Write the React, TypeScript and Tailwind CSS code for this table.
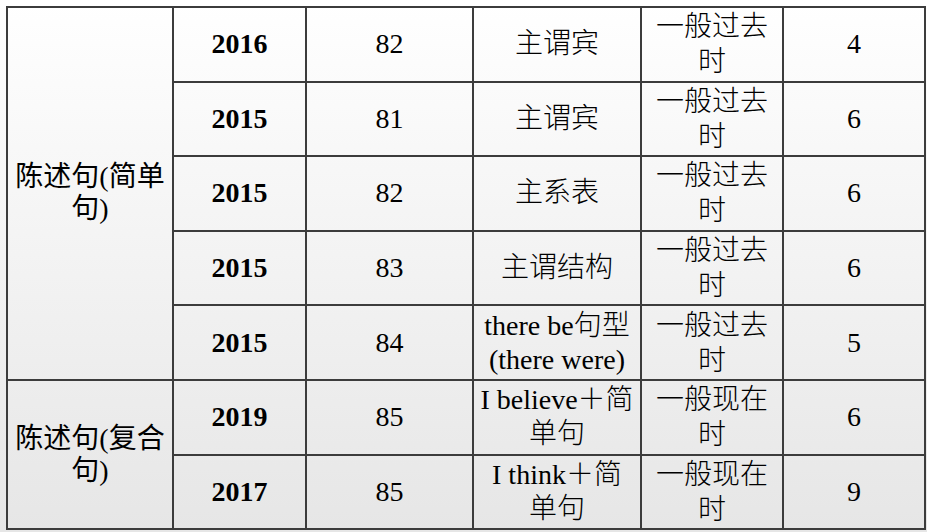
const rows = [
  { year: "2016", num: "82", type: ["主谓宾"], tense: ["一般过去", "时"], count: "4" },
  { year: "2015", num: "81", type: ["主谓宾"], tense: ["一般过去", "时"], count: "6" },
  { year: "2015", num: "82", type: ["主系表"], tense: ["一般过去", "时"], count: "6" },
  { year: "2015", num: "83", type: ["主谓结构"], tense: ["一般过去", "时"], count: "6" },
  { year: "2015", num: "84", type: ["there be句型", "(there were)"], tense: ["一般过去", "时"], count: "5" },
  { year: "2019", num: "85", type: ["I believe＋简", "单句"], tense: ["一般现在", "时"], count: "6" },
  { year: "2017", num: "85", type: ["I think＋简", "单句"], tense: ["一般现在", "时"], count: "9" },
];

const cell = "border-2 border-[#3c3c3c] text-center align-middle p-0";

function Lines({ lines, className }: { lines: string[]; className?: string }) {
  return (
    <div className={className}>
      {lines.map((l, i) => (
        <div key={i}>{l}</div>
      ))}
    </div>
  );
}

export default function App() {
  return (
    <div
      className="w-[927px] h-[532px] bg-gradient-to-b from-white to-[#e6e6e6] pt-[6px] pl-[6px] text-black text-[28px]"
      style={{ fontFamily: '"Liberation Serif", "Noto Sans CJK SC", serif' }}
    >
      <table className="table-fixed border-collapse w-[918px] border-2 border-[#1a1a1a]">
        <colgroup>
          <col className="w-[166px]" />
          <col className="w-[133px]" />
          <col className="w-[167px]" />
          <col className="w-[168px]" />
          <col className="w-[142px]" />
          <col className="w-[142px]" />
        </colgroup>
        <tbody>
          {rows.map((r, i) => (
            <tr key={i} className="h-[74.6px]">
              {i === 0 && (
                <td rowSpan={5} className={cell}>
                  <Lines lines={["陈述句(简单", "句)"]} className="leading-[32px]" />
                </td>
              )}
              {i === 5 && (
                <td rowSpan={2} className={cell}>
                  <Lines lines={["陈述句(复合", "句)"]} className="leading-[32px]" />
                </td>
              )}
              <td className={`${cell} font-bold`}>{r.year}</td>
              <td className={cell}>{r.num}</td>
              <td className={cell}>
                <Lines lines={r.type} className="leading-[34px] font-light" />
              </td>
              <td className={cell}>
                <Lines lines={r.tense} className="leading-[35px] font-light" />
              </td>
              <td className={cell}>{r.count}</td>
            </tr>
          ))}
        </tbody>
      </table>
    </div>
  );
}
